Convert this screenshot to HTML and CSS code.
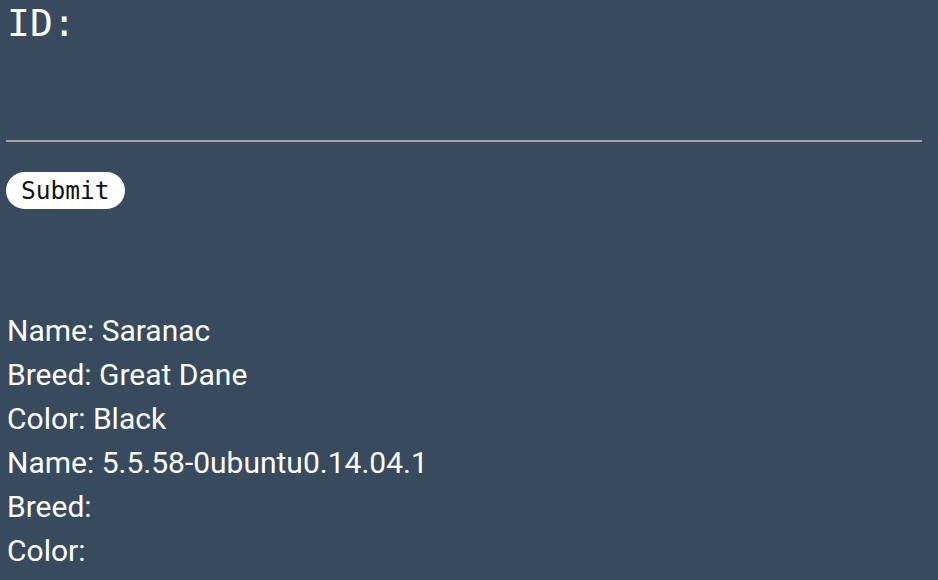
FILE: index.html
```html
<!DOCTYPE html>
<html>
<head>
<meta charset="utf-8">
<link rel="stylesheet" href="styles.css">
</head>
<body>
<form class="form">
  <label class="label" for="id">ID:</label>
  <input class="field" id="id" type="text">
  <button class="submit" type="button">Submit</button>
</form>
<div class="results">
  <div class="row">Name: Saranac</div>
  <div class="row">Breed: Great Dane</div>
  <div class="row">Color: Black</div>
  <div class="row">Name: 5.5.58-0ubuntu0.14.04.1</div>
  <div class="row">Breed:</div>
  <div class="row">Color:</div>
</div>
</body>
</html>
```
FILE: styles.css
```css
html, body {
  margin: 0;
  padding: 0;
  background: #374a5e;
  height: 100%;
}
body {
  padding: 0 16px 0 6px;
  color: #fff;
  overflow: hidden;
}
.form {
  display: flex;
  flex-direction: column;
  align-items: flex-start;
}
.label {
  font-family: "DejaVu Sans Mono", monospace;
  font-size: 38px;
  line-height: 42px;
  padding-top: 2px;
  padding-left: 1px;
}
.field {
  box-sizing: border-box;
  width: 916px;
  height: 98px;
  margin: 0;
  padding: 0;
  background: transparent;
  border: none;
  border-bottom: 2px solid #a3a3a3;
  outline: none;
}
.submit {
  margin-top: 30px;
  font-family: "DejaVu Sans Mono", monospace;
  font-size: 24.5px;
  line-height: 37px;
  height: 37px;
  padding: 0 15px;
  border: none;
  border-radius: 19px;
  background: #fff;
  color: #111;
}
.results {
  margin-top: 100px;
  padding-left: 1px;
  font-family: Roboto, sans-serif;
  font-size: 30px;
  line-height: 44px;
}
```
